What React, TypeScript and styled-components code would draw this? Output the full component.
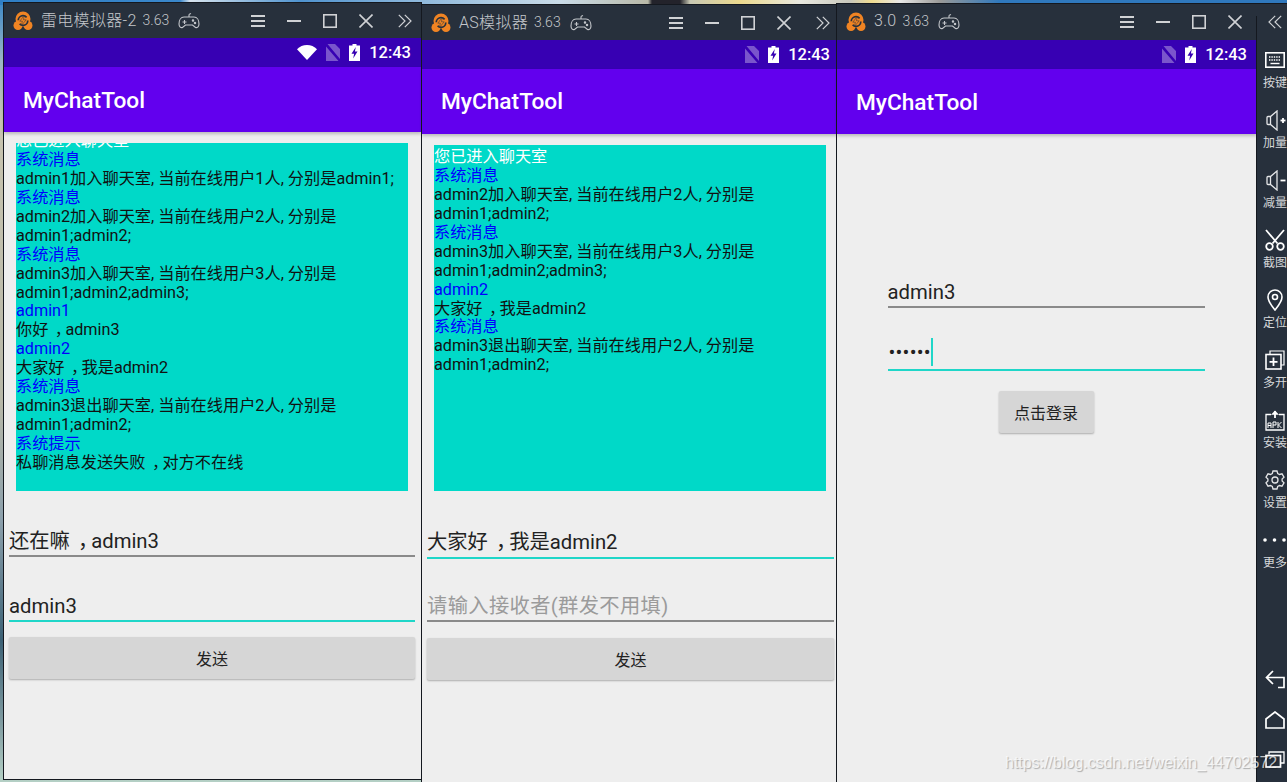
import React, { FC } from 'react';
import styled, { createGlobalStyle } from 'styled-components';

const GlobalStyle = createGlobalStyle`
  html, body {
    margin: 0;
    padding: 0;
    overflow: hidden;
    background: #2a3a4a;
  }
  * {
    box-sizing: border-box;
  }
`;

const UI_FONT = `Roboto, "Noto Sans CJK SC", sans-serif`;
const TITLE_BG = '#27303c';
const ACCENT = '#1fd6c8';

const Desktop = styled.div`
  position: relative;
  width: 1287px;
  height: 782px;
  overflow: hidden;
  font-family: ${UI_FONT};
  background:
    linear-gradient(90deg, #2f7ec4 0, #3a88cc 180px, #d8e4ee 190px, #4f93cf 300px, #8fb9dc 420px, #c9dbe8 560px, #b9b9a8 648px, #23232b 652px, #23232b 680px, #c8c8b4 690px, #ecd98e 740px, #e8e8e0 800px, #c8c8bc 850px, #f0dc90 872px, #e8e8e8 900px, #9a9a98 940px, #2f78bd 1000px, #2f78bd 1287px) top / 100% 5px no-repeat,
    linear-gradient(180deg, #3a86c6 0, #9ab6c4 60px, #c8c4b0 120px, #b8b8a8 400px, #8ca0ac 520px, #3d6276 640px, #7e9aa0 720px, #b5d0c5 782px);
`;

const EmulatorWindow = styled.div<{ $left: number; $top: number; $width: number; $height: number }>`
  position: absolute;
  left: ${({ $left }) => $left}px;
  top: ${({ $top }) => $top}px;
  width: ${({ $width }) => $width}px;
  height: ${({ $height }) => $height}px;
  display: flex;
  flex-direction: column;
  border: 1px solid #14181f;
  background: #eeeeee;
`;

const MainColumn = styled.div`
  flex: 1;
  min-width: 0;
  display: flex;
  flex-direction: column;
`;

const DockedWindow = styled(EmulatorWindow)`
  flex-direction: row;
  border-right: none;
  border-bottom: none;
`;

const TitleBar = styled.div<{ $right: number; $height?: number }>`
  flex: none;
  height: ${({ $height }) => $height ?? 35}px;
  padding: 0 ${({ $right }) => $right}px 0 9px;
  display: flex;
  align-items: center;
  background: ${TITLE_BG};
  color: #c4c7cb;
`;

const TitleName = styled.span`
  margin: 0 0 3px 8px;
  font-size: 16px;
  font-weight: 300;
  letter-spacing: 0.3px;
  white-space: nowrap;
`;

const TitleVersion = styled.span`
  margin: 0 0 2px 6px;
  font-size: 14px;
  font-weight: 300;
`;

const Controls = styled.div`
  margin-left: auto;
  display: flex;
  align-items: center;
  gap: 22px;
`;

const OverflowGap = styled.span`
  display: flex;
  margin-left: 3px;
`;

const StatusBar = styled.div<{ $right: number; $height?: number }>`
  flex: none;
  height: ${({ $height }) => $height ?? 29}px;
  padding-right: ${({ $right }) => $right}px;
  display: flex;
  align-items: center;
  justify-content: flex-end;
  gap: 9px;
  background: #3700b3;
`;

const Clock = styled.span`
  font-size: 16.5px;
  font-weight: 500;
  color: #fff;
`;

const AppBar = styled.div<{ $lower?: number }>`
  flex: none;
  height: 65px;
  padding: ${({ $lower }) => $lower ?? 0}px 0 0 19px;
  display: flex;
  align-items: center;
  background: #6200ee;
  color: #fff;
  font-size: 22.7px;
  font-weight: 500;
  box-shadow: 0 2px 3px rgba(0, 0, 0, 0.22);
  position: relative;
`;

const Screen = styled.div<{ $right: number }>`
  flex: 1;
  padding: 11px ${({ $right }) => $right}px 0 5px;
  display: flex;
  flex-direction: column;
`;

const ChatBox = styled.div<{ $height: number }>`
  flex: none;
  width: 392px;
  height: ${({ $height }) => $height}px;
  margin-left: 7px;
  overflow: hidden;
  background: #00d9c8;
`;

const ChatScroll = styled.div<{ $offset: number }>`
  margin-top: ${({ $offset }) => $offset}px;
  font-size: 16.2px;
  line-height: 18.93px;
`;

const ChatLine = styled.div<{ $kind: LineKind }>`
  color: ${({ $kind }) => ({ notice: '#ffffff', sender: '#0000ff', body: '#111111' })[$kind]};
`;

// the emulator's font sets the full-width comma in the middle of its cell
const WideComma = styled.span`
  margin-left: 0.4em;
  letter-spacing: -0.35em;
`;

const Field = styled.div<{ $focused?: boolean; $top: number; $inset?: number }>`
  flex: none;
  height: 48px;
  margin-top: ${({ $top }) => $top}px;
  padding-top: ${({ $inset }) => $inset ?? 18}px;
  display: flex;
  align-items: center;
  font-size: 20.3px;
  line-height: 28px;
  color: #222;
  border-bottom: 2px solid ${({ $focused }) => ($focused ? ACCENT : '#8a8a8a')};
`;

const Placeholder = styled.span`
  color: #9b9b9b;
  letter-spacing: 0.35px;
  white-space: nowrap;
`;

const PasswordDots = styled.span`
  margin-left: 1px;
  margin-bottom: 6px;
  letter-spacing: 0.2px;
`;

const Caret = styled.span`
  width: 2px;
  height: 28px;
  margin-bottom: 6px;
  background: ${ACCENT};
`;

const RaisedButton = styled.button<{ $top: number; $width?: number }>`
  flex: none;
  width: ${({ $width }) => ($width ? `${$width}px` : '100%')};
  height: 42px;
  margin-top: ${({ $top }) => $top}px;
  padding: 0;
  border: none;
  border-radius: 2px;
  background: #d6d6d6;
  box-shadow: 0 1px 2px rgba(0, 0, 0, 0.28);
  color: #222;
  font-family: ${UI_FONT};
  font-size: 16px;
`;

const LoginForm = styled.div`
  flex: 1;
  padding: 126px 2px 0 0;
  display: flex;
  flex-direction: column;
  align-items: center;
`;

const LoginField = styled(Field)`
  width: 317px;
`;

const Sidebar = styled.aside`
  flex: none;
  width: 36px;
  display: flex;
  flex-direction: column;
  align-items: center;
  background: ${TITLE_BG};
  position: relative;
  padding-bottom: 17px;

  &::before {
    content: '';
    position: absolute;
    left: -1px;
    top: 12px;
    bottom: 0;
    width: 1px;
    background: #14181f;
  }
`;

const CollapseButton = styled.div`
  height: 35px;
  margin-bottom: 9px;
  display: flex;
  align-items: center;
`;

const ToolList = styled.div`
  display: flex;
  flex-direction: column;
`;

const Tool = styled.div`
  width: 24px;
  height: 60px;
  display: flex;
  flex-direction: column;
  align-items: center;
  color: #fff;
`;

const ToolIcon = styled.span`
  height: 24px;
  display: flex;
  align-items: center;
  justify-content: center;
`;

const ToolLabel = styled.span`
  margin-top: 3px;
  font-size: 12px;
  line-height: 17px;
  color: #d6d8da;
  white-space: nowrap;
`;

const NavKeys = styled.div`
  margin-top: auto;
  display: flex;
  flex-direction: column;
  align-items: center;
  gap: 22px;
`;

const Watermark = styled.div`
  position: absolute;
  left: 1005px;
  top: 754px;
  font-family: "Liberation Sans", Arial, sans-serif;
  font-size: 16px;
  line-height: 18px;
  color: rgba(255, 255, 255, 0.72);
  text-shadow: 1px 1px 1px rgba(0, 0, 0, 0.28);
  white-space: nowrap;
  pointer-events: none;
`;

type LineKind = 'notice' | 'sender' | 'body';
type Line = [LineKind, string];

const ROOM_A: Line[] = [
  ['notice', '您已进入聊天室'],
  ['sender', '系统消息'],
  ['body', 'admin1加入聊天室, 当前在线用户1人, 分别是admin1;'],
  ['sender', '系统消息'],
  ['body', 'admin2加入聊天室, 当前在线用户2人, 分别是admin1;admin2;'],
  ['sender', '系统消息'],
  ['body', 'admin3加入聊天室, 当前在线用户3人, 分别是admin1;admin2;admin3;'],
  ['sender', 'admin1'],
  ['body', '你好，admin3'],
  ['sender', 'admin2'],
  ['body', '大家好，我是admin2'],
  ['sender', '系统消息'],
  ['body', 'admin3退出聊天室, 当前在线用户2人, 分别是admin1;admin2;'],
  ['sender', '系统提示'],
  ['body', '私聊消息发送失败，对方不在线'],
];

const ROOM_B: Line[] = [
  ['notice', '您已进入聊天室'],
  ['sender', '系统消息'],
  ['body', 'admin2加入聊天室, 当前在线用户2人, 分别是admin1;admin2;'],
  ['sender', '系统消息'],
  ['body', 'admin3加入聊天室, 当前在线用户3人, 分别是admin1;admin2;admin3;'],
  ['sender', 'admin2'],
  ['body', '大家好，我是admin2'],
  ['sender', '系统消息'],
  ['body', 'admin3退出聊天室, 当前在线用户2人, 分别是admin1;admin2;'],
];

const TOOLS: { label: string; icon: React.ReactNode }[] = [
  { label: '按键', icon: <KeyboardIcon /> },
  { label: '加量', icon: <VolumeIcon plus /> },
  { label: '减量', icon: <VolumeIcon /> },
  { label: '截图', icon: <ScissorsIcon /> },
  { label: '定位', icon: <PinIcon /> },
  { label: '多开', icon: <MultiIcon /> },
  { label: '安装', icon: <ApkIcon /> },
  { label: '设置', icon: <GearIcon /> },
  { label: '更多', icon: <MoreIcon /> },
];

function Logo() {
  return (
    <svg width="20" height="20" viewBox="0 0 20 20">
      <circle cx="10" cy="8" r="7.500" fill="#f08423" />
      <circle cx="5" cy="14.500" r="4.500" fill="#f08423" />
      <circle cx="15" cy="14.500" r="4.500" fill="#f08423" />
      <circle cx="10" cy="9.500" r="4.800" fill="none" stroke={TITLE_BG} strokeWidth="1.700" strokeDasharray="11 4" />
      <path d="M11.200 4.500L6.800 10.200h2.600L8.400 14.500l4.800-5.700h-2.700z" fill="#f08423" stroke={TITLE_BG} strokeWidth=".5" />
    </svg>
  );
}

function GamepadIcon() {
  return (
    <svg width="22" height="18" viewBox="0 0 22 18" fill="none" stroke="#c4c7cb" strokeWidth="1.100" style={{ marginLeft: 9 }}>
      <path d="M11 5V3c0-1 1-1 2-1.500M6 5h10c3 0 5 3 5 7 0 3-2 4-3.500 3.500L14.500 13h-7L4.500 15.500C3 16 1 15 1 12c0-4 2-7 5-7z" />
      <path d="M4.500 10h4M6.500 8v4" />
      <circle cx="15" cy="8.500" r=".7" fill="#c4c7cb" />
      <circle cx="17" cy="11" r=".7" fill="#c4c7cb" />
    </svg>
  );
}

function MenuIcon() {
  return (
    <svg width="14" height="14" viewBox="0 0 14 14" stroke="#d0d2d5" strokeWidth="2" style={{ display: 'block' }}>
      <path d="M0 2h14M0 7h14M0 12h14" />
    </svg>
  );
}

function MinimizeIcon() {
  return (
    <svg width="14" height="14" viewBox="0 0 14 14" stroke="#d0d2d5" strokeWidth="2" style={{ display: 'block' }}>
      <path d="M0 7h14" />
    </svg>
  );
}

function MaximizeIcon() {
  return (
    <svg width="14" height="14" viewBox="0 0 14 14" fill="none" stroke="#d0d2d5" strokeWidth="1.600" style={{ display: 'block' }}>
      <rect x=".8" y=".8" width="12.400" height="12.400" />
    </svg>
  );
}

function CloseIcon() {
  return (
    <svg width="14" height="14" viewBox="0 0 14 14" stroke="#d0d2d5" strokeWidth="1.600" style={{ display: 'block' }}>
      <path d="M.5.5l13 13M13.500.5l-13 13" />
    </svg>
  );
}

function ChevronsIcon({ left }: { left?: boolean }) {
  return (
    <svg width="14" height="14" viewBox="0 0 14 14" fill="none" stroke="#d0d2d5" strokeWidth="1.200" style={{ display: 'block', transform: left ? 'scaleX(-1)' : undefined }}>
      <path d="M.8.8L7 7 .8 13.200M6.800.8L13 7l-6.200 6.200" />
    </svg>
  );
}

function WifiIcon() {
  return (
    <svg width="20" height="15" viewBox="0 0 20 15" fill="#fff">
      <path d="M0 4.200C2.600 1.600 6.200 0 10 0s7.400 1.600 10 4.200L10 15z" />
    </svg>
  );
}

function NoSimIcon() {
  return (
    <svg width="14" height="17" viewBox="0 0 14 17" fill="#7a55cc">
      <path d="M0 0h9l5 5v10L1.500 0zM0 2.500L12.500 17H0z" />
    </svg>
  );
}

function BatteryIcon() {
  return (
    <svg width="11" height="17" viewBox="0 0 11 17">
      <path d="M3.500 0h4v1.500H11V17H0V1.500h3.500z" fill="#fff" />
      <path d="M6.800 3L2.500 9.800h2.600l-.9 4.700L8.500 7.500H5.900z" fill="#3700b3" />
    </svg>
  );
}

function KeyboardIcon() {
  return (
    <svg width="20" height="16" viewBox="0 0 20 16" fill="none" stroke="#fff">
      <rect x=".8" y=".8" width="18.400" height="14.400" strokeWidth="1.600" />
      <path d="M4 5h12M4 8h12" strokeWidth="1.400" strokeDasharray="1.400 1" />
      <path d="M5.500 11.500h9" strokeWidth="1.400" />
    </svg>
  );
}

function VolumeIcon({ plus }: { plus?: boolean }) {
  return (
    <svg width="20" height="21" viewBox="0 0 20 21" fill="none" stroke="#e4e5e7" strokeWidth="1.300" style={{ marginLeft: 1 }}>
      <path d="M1 7.500c0-.5.500-1 1-1h2.500L11 1v19l-6.500-5.500H2c-.5 0-1-.5-1-1zM4.500 6.500v8" />
      <path d="M14.500 10.500h5" stroke="#fff" strokeWidth="1.800" />
      {plus && <path d="M17 8v5" stroke="#fff" strokeWidth="1.800" />}
    </svg>
  );
}

function ScissorsIcon() {
  return (
    <svg width="20" height="22" viewBox="0 0 20 22" fill="none" stroke="#fff" strokeWidth="1.800">
      <circle cx="4.500" cy="17.500" r="3.300" />
      <circle cx="15.500" cy="17.500" r="3.300" />
      <path d="M1 1l11.500 13.500M19 1L7.500 14.500" />
    </svg>
  );
}

function PinIcon() {
  return (
    <svg width="16" height="22" viewBox="0 0 16 22" fill="none" stroke="#fff" strokeWidth="1.600">
      <path d="M8 21C4 16 1 12.500 1 8a7 7 0 0 1 14 0c0 4.500-3 8-7 13z" />
      <circle cx="8" cy="8" r="2.500" />
    </svg>
  );
}

function MultiIcon() {
  return (
    <svg width="20" height="20" viewBox="0 0 20 20" fill="none" stroke="#fff" strokeWidth="1.500">
      <path d="M5 4V1h14v14h-3" strokeWidth="1.200" />
      <rect x="1" y="4.500" width="15" height="14.500" strokeWidth="1.600" />
      <path d="M8.500 7.500v8.500M4.500 11.800h8" strokeWidth="1.800" />
    </svg>
  );
}

function ApkIcon() {
  return (
    <svg width="20" height="21" viewBox="0 0 20 21" fill="none" stroke="#fff">
      <path d="M6 4.500H1v15.500h18V4.500h-5" strokeWidth="1.300" />
      <path d="M10 1v7" strokeWidth="1.800" />
      <path d="M6.500 4.500L10 .8l3.500 3.700z" fill="#fff" strokeWidth=".5" />
      <path d="M3 18v-5h3v5M3 15.500h3M8 18v-6h3v3H8M13 12v6M16.500 12L13.500 15l3 3" strokeWidth="1" />
    </svg>
  );
}

function GearIcon() {
  return (
    <svg width="20" height="20" viewBox="0 0 20 20" fill="none" stroke="#e4e5e7" strokeWidth="1.300">
      <path d="M8 1h4l.7 2.500 1.800 1 2.500-.7 2 3.400-1.900 1.800v2l1.900 1.800-2 3.400-2.500-.7-1.800 1L12 19H8l-.7-2.500-1.800-1-2.500.7-2-3.400L2.900 11V9L1 7.200l2-3.400 2.500.7 1.800-1z" />
      <circle cx="10" cy="10" r="3" />
    </svg>
  );
}

function MoreIcon() {
  return (
    <svg width="24" height="4" viewBox="0 0 24 4" fill="#fff" style={{ overflow: 'visible' }}>
      <circle cx="2" cy="2" r="1.800" />
      <circle cx="11.500" cy="2" r="1.800" />
      <circle cx="21" cy="2" r="1.800" />
    </svg>
  );
}

function BackIcon() {
  return (
    <svg width="20" height="19" viewBox="0 0 20 19" fill="none" stroke="#fff" strokeWidth="1.700">
      <path d="M8 1L1.500 7.500 8 14M1.500 7.500H19v10h-6" />
    </svg>
  );
}

function HomeIcon() {
  return (
    <svg width="20" height="18" viewBox="0 0 20 18" fill="none" stroke="#fff" strokeWidth="1.700">
      <path d="M1 8l9-7 9 7v9H1z" />
    </svg>
  );
}

function RecentIcon() {
  return (
    <svg width="20" height="17" viewBox="0 0 20 17" fill="none" stroke="#fff">
      <path d="M4 3.500V1h15v11h-3" strokeWidth="1.300" />
      <rect x="1" y="4.500" width="14.500" height="11.500" strokeWidth="1.700" />
    </svg>
  );
}

const withComma = (text: string) => {
  const [head, tail] = text.split('，');
  if (tail === undefined) return text;
  return (
    <>
      {head}
      <WideComma>，</WideComma>
      {tail}
    </>
  );
};

const WindowTitle: FC<{ name: string; right: number; height?: number; overflow?: boolean }> = ({ name, right, height, overflow }) => (
  <TitleBar $right={right} $height={height}>
    <Logo />
    <TitleName>{name}</TitleName>
    <TitleVersion>3.63</TitleVersion>
    <GamepadIcon />
    <Controls>
      <MenuIcon />
      <MinimizeIcon />
      <MaximizeIcon />
      <CloseIcon />
      {overflow && (
        <OverflowGap>
          <ChevronsIcon />
        </OverflowGap>
      )}
    </Controls>
  </TitleBar>
);

const Status: FC<{ right: number; wifi?: boolean; height?: number }> = ({ right, wifi, height }) => (
  <StatusBar $right={right} $height={height}>
    {wifi && <WifiIcon />}
    <NoSimIcon />
    <BatteryIcon />
    <Clock>12:43</Clock>
  </StatusBar>
);

const Chat: FC<{ lines: Line[]; height: number; offset: number }> = ({ lines, height, offset }) => (
  <ChatBox $height={height}>
    <ChatScroll $offset={offset}>
      {lines.map(([kind, text], i) => (
        <ChatLine key={i} $kind={kind}>
          {withComma(text)}
        </ChatLine>
      ))}
    </ChatScroll>
  </ChatBox>
);

export default function App() {
  return (
    <Desktop>
      <GlobalStyle />

      <EmulatorWindow $left={3} $top={2} $width={419} $height={778}>
        <WindowTitle name="雷电模拟器-2" right={9} overflow />
        <Status right={10} wifi />
        <AppBar $lower={1}>MyChatTool</AppBar>
        <Screen $right={6}>
          <Chat lines={ROOM_A} height={348} offset={-11} />
          <Field $top={18}>
            <span>{withComma('还在嘛，admin3')}</span>
          </Field>
          <Field $top={17} $focused>
            admin3
          </Field>
          <RaisedButton $top={15}>发送</RaisedButton>
        </Screen>
      </EmulatorWindow>

      <EmulatorWindow $left={421} $top={4} $width={417} $height={782}>
        <WindowTitle name="AS模拟器" right={7} overflow />
        <Status right={7} />
        <AppBar>MyChatTool</AppBar>
        <Screen $right={3}>
          <Chat lines={ROOM_B} height={346} offset={3} />
          <Field $top={20} $inset={15} $focused>
            <span>{withComma('大家好，我是admin2')}</span>
          </Field>
          <Field $top={15}>
            <Placeholder>请输入接收者(群发不用填)</Placeholder>
          </Field>
          <RaisedButton $top={16}>发送</RaisedButton>
        </Screen>
      </EmulatorWindow>

      <DockedWindow $left={836} $top={3} $width={457} $height={782}>
        <MainColumn>
          <WindowTitle name="3.0" right={15} height={36} />
          <Status right={10} />
          <AppBar $lower={2}>MyChatTool</AppBar>
          <LoginForm>
            <LoginField $top={0}>admin3</LoginField>
            <LoginField $top={15} $focused>
              <PasswordDots>••••••</PasswordDots>
              <Caret />
            </LoginField>
            <RaisedButton $top={20} $width={95}>
              点击登录
            </RaisedButton>
          </LoginForm>
        </MainColumn>
        <Sidebar>
          <CollapseButton>
            <ChevronsIcon left />
          </CollapseButton>
          <ToolList>
            {TOOLS.map(({ label, icon }) => (
              <Tool key={label}>
                <ToolIcon>{icon}</ToolIcon>
                <ToolLabel>{label}</ToolLabel>
              </Tool>
            ))}
          </ToolList>
          <NavKeys>
            <BackIcon />
            <HomeIcon />
            <RecentIcon />
          </NavKeys>
        </Sidebar>
      </DockedWindow>

      <Watermark>https://blog.csdn.net/weixin_44702572</Watermark>
    </Desktop>
  );
}
